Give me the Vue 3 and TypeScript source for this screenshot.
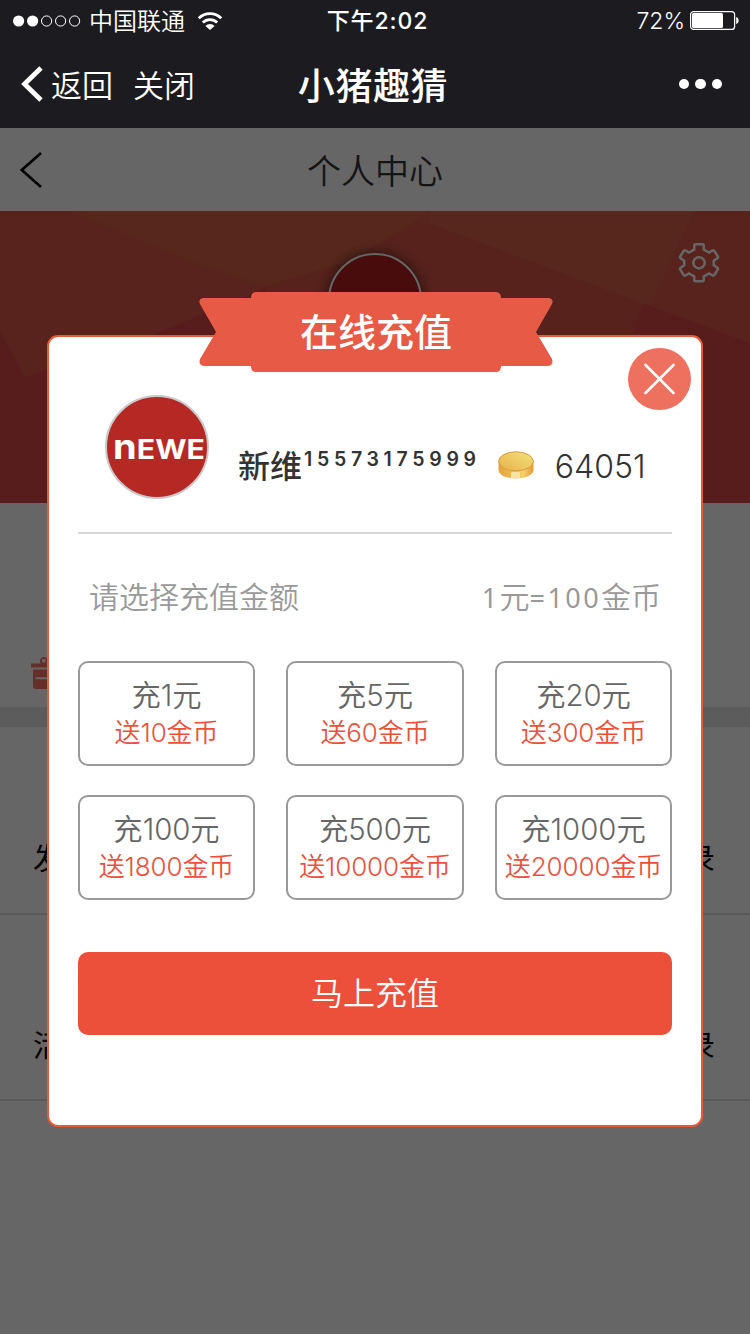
<script setup lang="ts">
interface Plan {
  pay: string
  bonus: string
}

const plans: Plan[] = [
  { pay: '充1元', bonus: '送10金币' },
  { pay: '充5元', bonus: '送60金币' },
  { pay: '充20元', bonus: '送300金币' },
  { pay: '充100元', bonus: '送1800金币' },
  { pay: '充500元', bonus: '送10000金币' },
  { pay: '充1000元', bonus: '送20000金币' },
]

const rows: [string, string][] = [
  ['发', '录'],
  ['活', '录'],
]
</script>

<template>
  <div class="screen">
    <header class="chrome">
      <div class="status">
        <div class="status-left">
          <svg class="signal" width="68" height="12" viewBox="0 0 68 12">
            <circle cx="5.6" cy="6" r="5.6" fill="#fff" />
            <circle cx="19.6" cy="6" r="5.6" fill="#fff" />
            <circle cx="33.6" cy="6" r="5.1" fill="none" stroke="#fff" />
            <circle cx="47.6" cy="6" r="5.1" fill="none" stroke="#fff" />
            <circle cx="61.6" cy="6" r="5.1" fill="none" stroke="#fff" />
          </svg>
          <span class="carrier">中国联通</span>
          <svg class="wifi" width="26" height="20" viewBox="0 0 26 20">
            <g fill="none" stroke="#fff" stroke-width="2.8">
              <path d="M1.8 7.2a15.8 15.8 0 0 1 22.4 0" />
              <path d="M5.8 11.6a10.2 10.2 0 0 1 14.4 0" />
            </g>
            <path d="M13 19 8.4 14.9a6.5 6.5 0 0 1 9.2 0z" fill="#fff" />
          </svg>
        </div>
        <div class="clock">下午2:02</div>
        <div class="status-right">
          <span class="percent">72%</span>
          <svg class="battery" width="50" height="20" viewBox="0 0 50 20">
            <rect x=".6" y=".6" width="44" height="17.8" rx="3" fill="none" stroke="#fff" stroke-width="1.2" />
            <rect x="2" y="2" width="31" height="15" rx="1.5" fill="#fff" />
            <path d="M46.2 6c3.2.8 3.2 6.2 0 7z" fill="#fff" />
          </svg>
        </div>
      </div>
      <div class="nav">
        <div class="nav-left">
          <svg width="22" height="36" viewBox="0 0 22 36">
            <path d="M20 2 3.5 18 20 34" fill="none" stroke="#fff" stroke-width="4.8" />
          </svg>
          <span class="back">返回</span>
          <span class="close-page">关闭</span>
        </div>
        <div class="nav-title">小猪趣猜</div>
        <div class="more"><i></i><i></i><i></i></div>
      </div>
    </header>

    <main class="page">
      <div class="page-head">
        <svg class="page-back" width="22" height="36" viewBox="0 0 22 36">
          <path d="M21 1 1.8 18 21 35" fill="none" stroke="#000" stroke-width="2.6" />
        </svg>
        <h1>个人中心</h1>
      </div>
      <section class="hero">
        <svg class="facets" width="750" height="292" viewBox="0 0 750 292">
          <rect width="750" height="292" fill="#da4a46" />
          <path d="M0 0H750V132L428 12 265 77 150 125 25 166 0 120z" fill="#da5846" />
          <path d="M265 77 375 30 428 12 643 92 625 150H300z" fill="#da5646" />
          <path d="M72 0H430L350 50 265 75 190 50z" fill="#da6346" />
          <path d="M430 0H694L650 95 428 12z" fill="#da6046" />
        </svg>
        <div class="member-avatar"></div>
        <svg class="gear" width="42" height="41" viewBox="0 0 44 44" preserveAspectRatio="none">
          <path
            d="M18.5 2.5h7q1.5 0 1.5 1.8V8l5.5 3.3 3.3-2q1.6-.9 2.6.7l3.1 5.3q.9 1.4-.6 2.4L37.5 20v5l3.4 2.3q1.5 1 .6 2.4L38.4 35q-1 1.6-2.6.7l-3.3-2L27 37v3.2q0 1.8-1.5 1.8h-7q-1.5 0-1.5-1.8V37l-5.5-3.3-3.3 2q-1.6.9-2.6-.7l-3.1-5.3q-.9-1.4.6-2.4L6.5 25v-5l-3.4-2.3q-1.5-1-.6-2.4L5.6 10q1-1.6 2.6-.7l3.3 2L17 8V4.3q0-1.8 1.5-1.8z"
            fill="none" stroke="#fff" stroke-width="2.7" />
          <circle cx="22" cy="22.3" r="6" fill="none" stroke="#fff" stroke-width="2.7" />
        </svg>
      </section>
      <section class="gifts">
        <svg width="40" height="34" viewBox="0 0 40 34">
          <g fill="#fa7565">
            <path d="M0 6.5h40v4H0z" />
            <path d="M2 12.5h36V29a3 3 0 0 1-3 3H5a3 3 0 0 1-3-3zM4.5 20.3v2h31v-2z" fill-rule="evenodd" />
          </g>
          <circle cx="12.8" cy="3.8" r="2.9" fill="none" stroke="#fa7565" stroke-width="1.9" />
        </svg>
      </section>
      <div class="gap"></div>
      <div v-for="row in rows" :key="row[0]" class="row">
        <span>{{ row[0] }}</span><span>{{ row[1] }}</span>
      </div>
    </main>

    <div class="mask">
      <section class="dialog">
        <div class="ribbon">
          <svg class="ribbon-shape" width="354" height="80" viewBox="0 0 354 80">
            <path
              d="M52 6H4Q-1 7 1 12L17 40 1 67q-2 6 4 7H52q0 6 5 6H297q5 0 5-6H349q6-1 4-7L337 40 353 12q2-5-3-6H302q0-6-5-6H57q-5 0-5 6z"
              fill="#e75a45" />
          </svg>
          <h2>在线充值</h2>
        </div>
        <button class="dismiss" type="button">
          <svg width="63" height="62" viewBox="0 0 63 62">
            <path d="M17.5 17 45.5 45M45.5 17 17.5 45" stroke="#fff" stroke-width="2.6" stroke-linecap="round" />
          </svg>
        </button>
        <div class="account">
          <div class="logo"><div class="wordmark"><span class="logo-n">n</span><span>EWE</span></div></div>
          <div class="name">新维<span class="phone">15573175999</span></div>
          <svg class="coin" width="36" height="28" viewBox="0 0 36 28">
            <defs>
              <linearGradient id="side">
                <stop offset="0" stop-color="#e8a238" />
                <stop offset=".45" stop-color="#edbd52" />
                <stop offset=".7" stop-color="#f2d36a" />
                <stop offset="1" stop-color="#e59b36" />
              </linearGradient>
              <linearGradient id="face" x1="0" y1="1" x2="1" y2="0">
                <stop offset="0" stop-color="#e8b249" />
                <stop offset="1" stop-color="#f3e07a" />
              </linearGradient>
            </defs>
            <path d="M.5 10v9C1 24.5 9 27.5 18 27.5S35 24.5 35.5 19v-9z" fill="url(#side)" />
            <ellipse cx="18" cy="10.3" rx="17.3" ry="9.5" fill="url(#face)" stroke="#d99a45" />
            <path d="M13 21h9v6h-9z" fill="#f9e3a4" />
          </svg>
          <span class="balance">64051</span>
        </div>
        <div class="hint">
          <span>请选择充值金额</span>
          <span class="rate"><b>1</b>元<b>=100</b>金币</span>
        </div>
        <div class="plans">
          <button v-for="plan in plans" :key="plan.pay" type="button" class="plan">
            <span class="pay">{{ plan.pay }}</span>
            <span class="bonus">{{ plan.bonus }}</span>
          </button>
        </div>
        <button class="submit" type="button">马上充值</button>
      </section>
    </div>
  </div>
</template>

<style>
body {
  margin: 0;
}
</style>

<style scoped>
* {
  box-sizing: border-box;
}

.screen {
  position: relative;
  width: 750px;
  height: 1334px;
  overflow: hidden;
  background: #fff;
  font-family: Inter, 'Noto Sans CJK SC', sans-serif;
  font-weight: 350;
}

button {
  margin: 0;
  padding: 0;
  font: inherit;
}

svg {
  display: block;
  flex: none;
}

.chrome {
  height: 128px;
  background: #1c1c20;
  color: #fff;
}

.status {
  display: grid;
  grid-template-columns: 1fr auto 1fr;
  align-items: center;
  height: 41px;
  padding: 0 10px 0 13px;
}

.status-left,
.status-right {
  display: flex;
  align-items: center;
}

.status-right {
  justify-content: flex-end;
  gap: 5px;
}

.carrier {
  margin: 0 12px 0 8px;
  padding-top: 2px;
  font-size: 24px;
  line-height: 39px;
}

.clock {
  padding: 2px 0 0 2px;
  font-size: 23px;
  font-weight: 500;
  line-height: 39px;
  letter-spacing: 0.9px;
}

.percent {
  padding-top: 1px;
  font-size: 23px;
}

.nav {
  display: grid;
  grid-template-columns: 1fr auto 1fr;
  align-items: center;
  height: 86px;
  padding: 0 28px 0 21px;
}

.nav-left {
  display: flex;
  align-items: center;
  font-size: 31px;
}

.nav-left span {
  padding-bottom: 2px;
}

.back {
  margin: 0 20px 0 8px;
}

.nav-title {
  padding: 0 0 1px 3px;
  font-size: 37px;
  font-weight: 500;
  letter-spacing: 0.6px;
}

.more {
  display: flex;
  gap: 6px;
  justify-content: flex-end;
}

.more i {
  width: 10.5px;
  height: 10.5px;
  border-radius: 50%;
  background: #fff;
}

.page-head {
  display: grid;
  grid-template-columns: 1fr auto 1fr;
  align-items: center;
  height: 83px;
  padding: 0 20px;
}

h1,
h2 {
  margin: 0;
}

h1 {
  color: #353535;
  font-size: 34px;
  font-weight: 330;
}

.hero {
  position: relative;
  height: 292px;
  overflow: hidden;
}

.facets {
  position: absolute;
  inset: 0;
}

.member-avatar {
  position: absolute;
  top: 42px;
  left: 328px;
  width: 94px;
  height: 94px;
  border: 2px solid #fff;
  border-radius: 50%;
  background: #b41e1e;
  box-shadow: 0 0 14px rgba(0, 0, 0, 0.6);
}

.gear {
  position: absolute;
  top: 31px;
  left: 678px;
}

.gifts {
  height: 204px;
  padding: 154px 31px 0;
}

.gap {
  height: 20px;
  background: #e6e6e6;
}

.row {
  display: flex;
  justify-content: space-between;
  height: 188px;
  padding: 109px 35px 0 33px;
  border-bottom: 2px solid #e2e2e2;
  color: #000;
  font-size: 30px;
  font-weight: 400;
  line-height: 44px;
}

.row + .row {
  height: 186px;
  padding-top: 108px;
}

.mask {
  position: absolute;
  inset: 128px 0 0;
  padding: 207px 47px 0;
  background: rgba(0, 0, 0, 0.6);
}

.dialog {
  position: relative;
  height: 792px;
  padding: 58px 29px 0;
  border: 2px solid #e75a3c;
  border-radius: 11px;
  background: #fff;
}

.ribbon {
  position: absolute;
  top: -45px;
  left: 150px;
  width: 354px;
  height: 80px;
}

.ribbon-shape {
  position: absolute;
  inset: 0;
}

h2 {
  position: relative;
  color: #fff;
  font-size: 38px;
  font-weight: 500;
  line-height: 80px;
  text-align: center;
}

.dismiss {
  position: absolute;
  top: 11px;
  right: 10px;
  width: 63px;
  height: 62px;
  border: 0;
  border-radius: 50%;
  background: #ee705e;
}

.account {
  display: flex;
  height: 139px;
  padding: 0 26px 0 27px;
  border-bottom: 2px solid #d6d6d6;
  color: #333;
}

.logo {
  display: flex;
  flex: none;
  justify-content: center;
  width: 104px;
  height: 104px;
  padding-left: 4px;
  border: 2px solid #c9c9c9;
  border-radius: 50%;
  background: #b52824;
  color: #fff;
  font-family: Inter, sans-serif;
  font-size: 27px;
  font-weight: 700;
  line-height: 106px;
}

.wordmark {
  display: flex;
  align-items: baseline;
  height: 100px;
  transform: scaleX(1.12);
}

.logo-n {
  font-size: 34px;
  line-height: 1;
}

.name {
  flex: none;
  margin-left: 29px;
  font-size: 32px;
  font-weight: 550;
  line-height: 143px;
}

.phone {
  position: relative;
  top: -12px;
  margin-left: 2px;
  font-size: 19.5px;
  font-weight: 600;
  letter-spacing: 4.7px;
}

.coin {
  margin: 56px 21px 0 17px;
}

.balance {
  font-size: 32px;
  line-height: 143px;
}

.hint {
  display: flex;
  justify-content: space-between;
  height: 127px;
  padding: 0 11px;
  color: #999;
  font-size: 30px;
  line-height: 127px;
}

.rate b {
  font-family: 'Noto Sans', sans-serif;
  font-size: 27px;
  font-weight: 400;
  letter-spacing: 2.4px;
}

.plans {
  display: grid;
  grid-template-columns: 177px 178px 177px;
  justify-content: space-between;
  row-gap: 29px;
}

.plan {
  display: flex;
  flex-direction: column;
  align-items: center;
  height: 105px;
  padding-top: 14px;
  border: 2px solid #999;
  border-radius: 10px;
  background: #fff;
  white-space: nowrap;
}

.pay {
  color: #666;
  font-size: 29.3px;
  line-height: 38px;
}

.bonus {
  color: #ec503a;
  font-size: 26px;
  line-height: 35px;
  letter-spacing: -0.1px;
}

.submit {
  display: block;
  width: 100%;
  height: 83px;
  margin-top: 52px;
  padding-bottom: 5px;
  border: 0;
  border-radius: 10px;
  background: #ec503a;
  color: #fff;
  font-size: 32px;
}
</style>
